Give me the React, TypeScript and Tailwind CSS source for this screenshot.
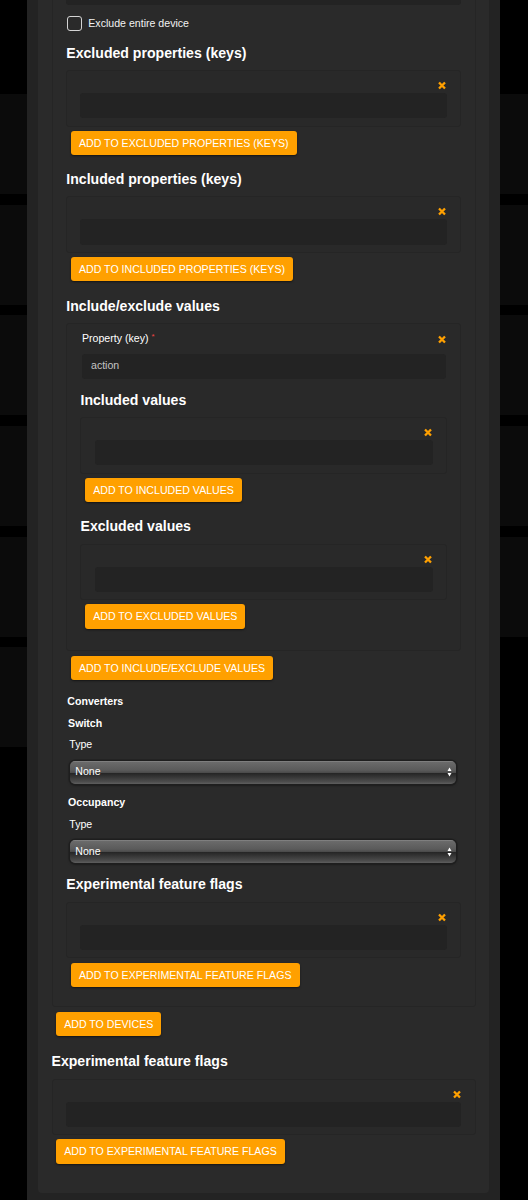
import React from 'react';

const font = "font-['Liberation_Sans',Arial,Helvetica,sans-serif]";

function RemoveIcon() {
  return (
    <svg
      width="8"
      height="9"
      viewBox="0 0 8 9"
      className="absolute right-[13.8px] top-[10.3px]"
    >
      <path d="M1 1.5L7 7.5M7 1.5L1 7.5" stroke="#ffa000" strokeWidth="2.3" />
    </svg>
  );
}

function Input({ value, className = '' }: { value?: string; className?: string }) {
  return (
    <div className={`flex h-[25.3px] items-center rounded-[3px] bg-[#232323] pl-[9px] text-[10.6px] text-[#c4c4c4] ${className}`}>
      {value}
    </div>
  );
}

function ArrayItem({ children, className = '' }: { children: React.ReactNode; className?: string }) {
  return (
    <div className={`relative rounded-[3px] border border-[#252525] bg-[#292929] px-[13.2px] ${className}`}>
      <RemoveIcon />
      {children}
    </div>
  );
}

// simple list with one empty string item
function StringItem({ className = '' }: { className?: string }) {
  return (
    <ArrayItem className={`pt-[22.2px] pb-[7.1px] ${className}`}>
      <Input />
    </ArrayItem>
  );
}

function AddButton({ label, className = '' }: { label: string; className?: string }) {
  return (
    <button className={`ml-[4.7px] flex h-[24.3px] w-fit items-center rounded-[3px] bg-[#ffa000] px-[8px] text-[10.6px] uppercase leading-none text-white shadow-[0_1px_2px_rgba(0,0,0,0.5)] ${className}`}>
      {label}
    </button>
  );
}

function Heading({ children, className = '' }: { children: React.ReactNode; className?: string }) {
  return <h3 className={`text-[14.1px] font-bold leading-[17px] text-white ${className}`}>{children}</h3>;
}

function Label({ children, className = '' }: { children: React.ReactNode; className?: string }) {
  return <div className={`h-[13px] text-[10.6px] leading-[13px] text-white ${className}`}>{children}</div>;
}

function Select({ className = '' }: { className?: string }) {
  return (
    <div
      className={`relative ml-[3.4px] mr-[5.4px] flex h-[22.6px] items-center rounded-[5px] bg-[linear-gradient(to_bottom,#8a8a8a_0%,#6a6a6a_6%,#5a5a5a_40%,#4c4c4c_50%,#262626_54%,#303030_64%,#4c4c4c_90%,#5e5e5e_100%)] pl-[5.6px] text-[10.6px] text-white shadow-[0_0_0_1.5px_#1e1e1e,0_1px_3px_rgba(0,0,0,0.6)] ${className}`}
    >
      None
      <svg width="5" height="10" viewBox="0 0 5 10" className="absolute right-[3.5px] top-1/2 -translate-y-1/2">
        <path d="M2.5 0.5L4.5 4H0.5Z M2.5 9.5L0.5 6H4.5Z" fill="#fff" />
      </svg>
    </div>
  );
}

export default function App() {
  return (
    <div className={`relative h-[1200px] overflow-hidden bg-black ${font}`}>
      {/* table rows behind the dialog */}
      <div className="flex flex-col gap-[10.7px] pt-[94px]">
        {[0, 1, 2, 3, 4].map((i) => (
          <div key={i} className="h-[100px] bg-[#0b0b0b]" />
        ))}
        <div className="h-[100px] w-1/2 bg-[#0b0b0b]" />
      </div>

      {/* dialog */}
      <div className="absolute inset-y-0 left-[27px] w-[473px] overflow-hidden bg-[#232323]">
        <div className="mx-[11px] -mt-[30px] rounded-b-[4px] bg-[#2a2a2a] px-[13.5px] pb-[29px]">
          {/* device */}
          <div className="rounded-[3px] border border-[#252525] pb-[19.4px] pl-[13.8px] pr-[13.5px] pt-[8.7px]">
            <Input />

            <label className="ml-[1px] mt-[11px] flex h-[15px] items-center gap-[6px]">
              <span className="h-[15px] w-[15px] rounded-[3px] border-[1.5px] border-[#d4d4d4]" />
              <span className="text-[10.6px] leading-[13px] text-[#f2f2f2]">Exclude entire device</span>
            </label>

            <Heading className="mt-[14.1px]">Excluded properties (keys)</Heading>
            <StringItem className="mt-[7.9px]" />
            <AddButton className="mt-[4.3px]" label="Add to Excluded properties (keys)" />

            <Heading className="mt-[15.6px]">Included properties (keys)</Heading>
            <StringItem className="mt-[8.4px]" />
            <AddButton className="mt-[4.3px]" label="Add to Included properties (keys)" />

            <Heading className="mt-[16.6px]">Include/exclude values</Heading>
            <ArrayItem className="mt-[8.6px] pb-[21.8px] pt-[7.9px]">
              <Label className="ml-[1.5px]">
                Property (key){' '}
                <span className="relative top-[-3px] text-[8px] leading-none text-[#ef4444]">*</span>
              </Label>
              <Input value="action" className="ml-[1.5px] mr-[1px] mt-[8.3px]" />

              <Heading className="mt-[12.9px]">Included values</Heading>
              <StringItem className="mt-[8.1px]" />
              <AddButton className="mt-[4.3px]" label="Add to Included values" />

              <Heading className="mt-[16px]">Excluded values</Heading>
              <StringItem className="mt-[8.4px]" />
              <AddButton className="mt-[4.3px]" label="Add to Excluded values" />
            </ArrayItem>
            <AddButton className="mt-[4.3px]" label="Add to Include/exclude values" />

            {/* converters */}
            <Label className="ml-[1px] mt-[15.1px] font-bold">Converters</Label>
            <Label className="ml-[1.8px] mt-[8.8px] font-bold">Switch</Label>
            <Label className="ml-[3px] mt-[8.5px]">Type</Label>
            <Select className="mt-[9.5px]" />
            <Label className="ml-[1.8px] mt-[12.4px] font-bold">Occupancy</Label>
            <Label className="ml-[3px] mt-[8.9px]">Type</Label>
            <Select className="mt-[9.5px]" />

            <Heading className="mt-[13px]">Experimental feature flags</Heading>
            <StringItem className="mt-[8.6px]" />
            <AddButton className="mt-[4.6px]" label="Add to Experimental feature flags" />
          </div>
          <AddButton className="ml-[4.5px] mt-[4.4px]" label="Add to Devices" />

          <Heading className="mt-[17.4px]">Experimental feature flags</Heading>
          <StringItem className="mt-[8.3px]" />
          <AddButton className="ml-[4.5px] mt-[4px]" label="Add to Experimental feature flags" />
        </div>
      </div>
    </div>
  );
}
